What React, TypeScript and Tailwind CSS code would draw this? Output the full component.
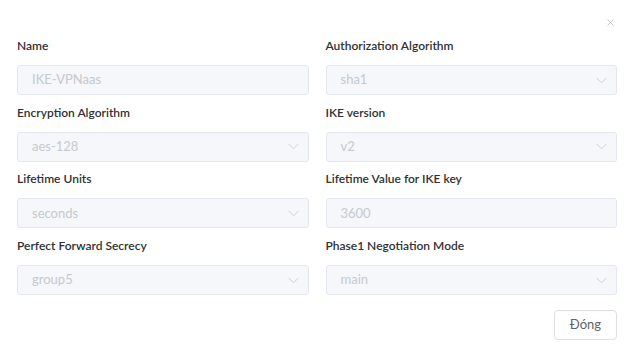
import { X } from 'lucide-react'

const fields = [
  { label: 'Name', value: 'IKE-VPNaas', select: false },
  { label: 'Authorization Algorithm', value: 'sha1', select: true },
  { label: 'Encryption Algorithm', value: 'aes-128', select: true },
  { label: 'IKE version', value: 'v2', select: true },
  { label: 'Lifetime Units', value: 'seconds', select: true },
  { label: 'Lifetime Value for IKE key', value: '3600', select: false },
  { label: 'Perfect Forward Secrecy', value: 'group5', select: true },
  { label: 'Phase1 Negotiation Mode', value: 'main', select: true },
]

function Field({ label, value, select }: { label: string; value: string; select: boolean }) {
  return (
    <div>
      <div className="h-5 mb-[9px] flex items-center text-[12px] font-semibold text-[#303133] leading-5">{label}</div>
      <div className="h-[30px] flex items-center justify-between pl-[14px] pr-[9px] bg-[#f5f7fa] border border-[#e4e7ed] rounded-[3px] text-[13px] text-[#c5c9d0]">
        <span>{value}</span>
        {select && (
          <svg width="11" height="7" viewBox="0 0 11 7" fill="none" className="text-[#cdd0d6]">
            <path d="M0.5 0.8 L5.5 5.8 L10.5 0.8" stroke="currentColor" strokeWidth="1" />
          </svg>
        )}
      </div>
    </div>
  )
}

export default function App() {
  return (
    <div className="w-[632px] h-[349px] bg-white relative" style={{ fontFamily: 'Lato, "Open Sans", sans-serif' }}>
      <button className="absolute right-[16px] top-[17px] text-[#909399]">
        <X size={11} strokeWidth={1.1} />
      </button>
      <div className="pt-[36px] pl-[17px] pr-[15px]">
        <div className="grid grid-cols-2 gap-x-[17px] gap-y-[7.7px]">
          {fields.map(f => <Field key={f.label} {...f} />)}
        </div>
        <div className="flex justify-end mt-[15px]">
          <button className="h-[30px] w-[63px] border border-[#dcdfe6] rounded-[4px] text-[13px] text-[#606266] bg-white">Đóng</button>
        </div>
      </div>
    </div>
  )
}
